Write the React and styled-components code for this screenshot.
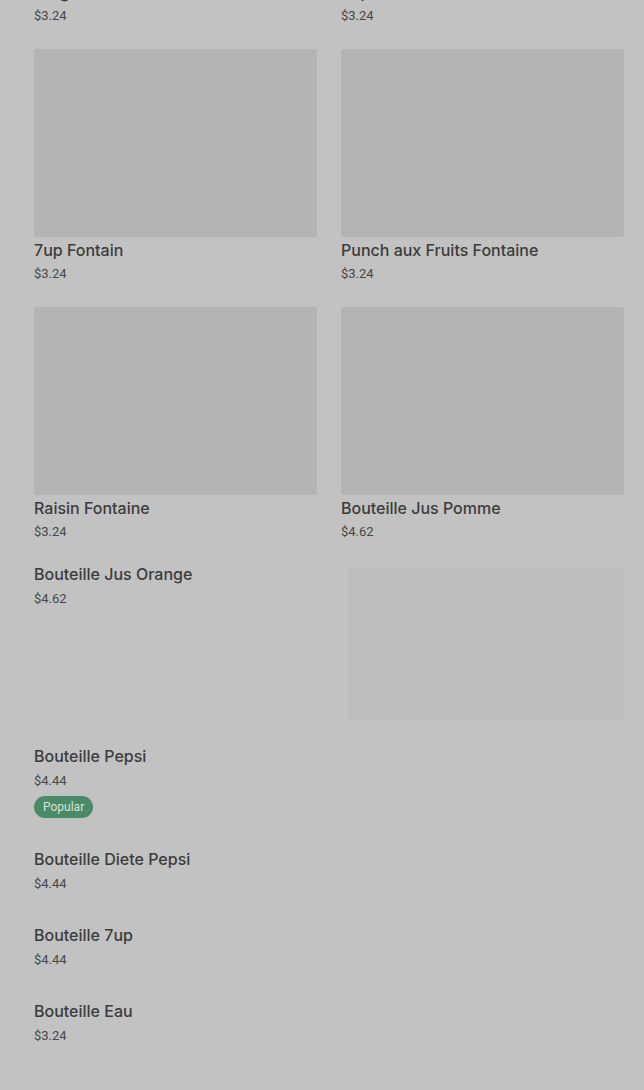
import React from 'react'
import styled, { createGlobalStyle } from 'styled-components'

const COLORS = {
  BACKDROP: '#c2c2c2',
  IMAGE: '#b4b4b4',
  IMAGE_FAINT: '#bdbdbd',
  FONT_DARK: '#3c3c3c',
  FONT_PRICE: '#474747',
  BADGE: '#4b8a69',
  BADGE_TEXT: '#d3e6da',
}

const GlobalStyle = createGlobalStyle`
  html, body {
    margin: 0;
    padding: 0;
    background: ${COLORS.BACKDROP};
    overflow: hidden;
  }
  body {
    font-family: Roboto, 'Liberation Sans', sans-serif;
  }
`

const Page = styled.div`
  margin-top: -209px;
  padding: 0 20px 40px 34px;
`
const Grid = styled.div`
  display: grid;
  grid-template-columns: 283px 283px;
  column-gap: 24px;
  row-gap: 24px;
`
const Card = styled.div`
  display: flex;
  flex-direction: column;
`
const Thumb = styled.div`
  height: 188px;
  background: ${COLORS.IMAGE};
  border-radius: 2px;
`
const Title = styled.div`
  margin-top: ${(p) => p.$top || 0}px;
  font-family: Inter, Roboto, 'Liberation Sans', sans-serif;
  font-size: 16px;
  line-height: 20px;
  font-weight: 500;
  color: ${COLORS.FONT_DARK};
  white-space: nowrap;
`
const Price = styled.div`
  margin-top: 5px;
  font-size: 13px;
  line-height: ${(p) => p.$line || 20}px;
  color: ${COLORS.FONT_PRICE};
`
const List = styled.div`
  display: flex;
  flex-direction: column;
  gap: 31px;
  margin-top: 23px;
`
const Featured = styled.div`
  display: flex;
  justify-content: space-between;
  margin-bottom: -6px;
`
const FaintThumb = styled.div`
  width: 276px;
  height: 154px;
  margin-top: 3px;
  background: ${COLORS.IMAGE_FAINT};
  border-radius: 3px;
`
const Item = styled.div`
  display: flex;
  flex-direction: column;
  align-items: flex-start;
`
const Badge = styled.span`
  margin-top: 5px;
  height: 22px;
  padding: 0 9px;
  border-radius: 11px;
  background: ${COLORS.BADGE};
  color: ${COLORS.BADGE_TEXT};
  font-size: 12px;
  line-height: 22px;
`

const gridItems = [
  { name: 'Ginger Ale Fontaine', price: '$3.24' },
  { name: 'Pepsi Fontaine', price: '$3.24' },
  { name: '7up Fontain', price: '$3.24' },
  { name: 'Punch aux Fruits Fontaine', price: '$3.24' },
  { name: 'Raisin Fontaine', price: '$3.24' },
  { name: 'Bouteille Jus Pomme', price: '$4.62' },
]

const listItems = [
  { name: 'Bouteille Pepsi', price: '$4.44', popular: true },
  { name: 'Bouteille Diete Pepsi', price: '$4.44' },
  { name: 'Bouteille 7up', price: '$4.44' },
  { name: 'Bouteille Eau', price: '$3.24' },
]

const App = () => (
  <>
    <GlobalStyle />
    <Page>
      <Grid>
        {gridItems.map((item) => (
          <Card key={item.name}>
            <Thumb />
            <Title $top={3}>{item.name}</Title>
            <Price $line={18}>{item.price}</Price>
          </Card>
        ))}
      </Grid>
      <List>
        <Featured>
          <Item>
            <Title>Bouteille Jus Orange</Title>
            <Price>$4.62</Price>
          </Item>
          <FaintThumb />
        </Featured>
        {listItems.map((item) => (
          <Item key={item.name}>
            <Title>{item.name}</Title>
            <Price>{item.price}</Price>
            {item.popular && <Badge>Popular</Badge>}
          </Item>
        ))}
      </List>
    </Page>
  </>
)

export default App
